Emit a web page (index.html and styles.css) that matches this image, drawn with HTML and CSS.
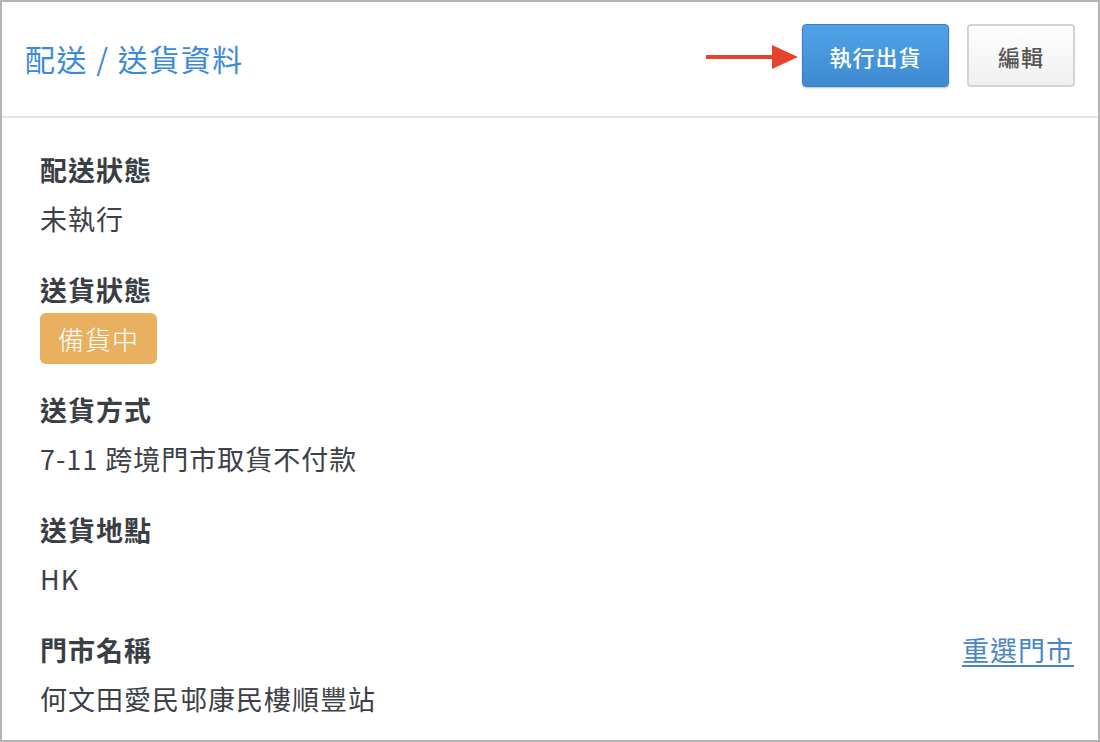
FILE: index.html
```html
<!DOCTYPE html>
<html lang="zh-Hant">
<head>
  <meta charset="UTF-8">
  <meta name="viewport" content="width=device-width, initial-scale=1.0">
  <title>配送 / 送貨資料</title>
  <link rel="stylesheet" href="styles.css">
</head>
<body>
  <div class="panel">
    <div class="panel-header">
      <h1 class="title">配送 / 送貨資料</h1>
      <div class="actions">
        <svg class="arrow" width="94" height="26" viewBox="0 0 94 26">
          <path d="M0 13 H68" stroke="#e5432b" stroke-width="4" stroke-linecap="round"/>
          <path d="M66 1 L92 13 L66 25 Z" fill="#e5432b"/>
        </svg>
        <button class="btn btn-primary">執行出貨</button>
        <button class="btn btn-default">編輯</button>
      </div>
    </div>

    <div class="panel-body">
      <div class="field">
        <div class="label">配送狀態</div>
        <div class="value">未執行</div>
      </div>
      <div class="field">
        <div class="label">送貨狀態</div>
        <div class="value"><span class="badge">備貨中</span></div>
      </div>
      <div class="field">
        <div class="label">送貨方式</div>
        <div class="value">7-11 跨境門市取貨不付款</div>
      </div>
      <div class="field">
        <div class="label">送貨地點</div>
        <div class="value">HK</div>
      </div>
      <div class="field">
        <div class="label-row">
          <div class="label">門市名稱</div>
          <a class="link" href="#">重選門市</a>
        </div>
        <div class="value">何文田愛民邨康民樓順豐站</div>
      </div>
    </div>
  </div>
</body>
</html>
```

FILE: styles.css
```css
* {
  box-sizing: border-box;
}
body {
  margin: 0;
  font-family: "Noto Sans CJK TC", "Noto Sans", sans-serif;
  background: #fff;
}
.panel {
  width: 1100px;
  height: 742px;
  border: 2px solid #b4b4b4;
  background: #fff;
  overflow: hidden;
}
.panel-header {
  height: 116px;
  display: flex;
  align-items: center;
  justify-content: space-between;
  padding: 0 23px 0 23px;
  border-bottom: 2px solid #e5e5e5;
}
.title {
  margin: -2px 0 0;
  font-size: 30px;
  font-weight: 400;
  color: #3b8ad7;
  letter-spacing: 1.5px;
}
.actions {
  display: flex;
  align-items: center;
  margin-top: -7px;
}
.arrow {
  margin-right: 2px;
  margin-top: 2px;
}
.btn {
  height: 63px;
  font-family: inherit;
  font-size: 22px;
  font-weight: 500;
  letter-spacing: 1px;
  border-radius: 4px;
  cursor: pointer;
}
.btn-primary {
  width: 147px;
  color: #fff;
  background: linear-gradient(#50a3e8, #3e8ad1);
  border: 1px solid #3a7fc2;
  box-shadow: 0 1px 2px rgba(0, 0, 0, 0.25);
}
.btn-default {
  width: 108px;
  margin-left: 18px;
  color: #555;
  background: linear-gradient(#fff, #efefef);
  border: 2px solid #d3d3d3;
}
.panel-body {
  padding: 27px 24px 0 38px;
}
.field {
  margin-bottom: 22px;
}
.label-row {
  display: flex;
  justify-content: space-between;
  align-items: center;
}
.label {
  font-size: 27px;
  line-height: 49px;
  font-weight: 700;
  letter-spacing: 1px;
  color: #3a3e45;
}
.value {
  height: 49px;
  font-size: 27px;
  line-height: 49px;
  letter-spacing: 1px;
  color: #3c4047;
}
.badge {
  display: inline-block;
  margin-top: -1px;
  padding: 0 18px 0 18px;
  height: 51px;
  line-height: 51px;
  font-size: 26px;
  font-weight: 300;
  color: #fff;
  background: #e8b05f;
  border-radius: 6px;
  vertical-align: top;
}
.link {
  font-size: 27px;
  line-height: 49px;
  letter-spacing: 1px;
  color: #4a86c7;
  text-decoration: underline;
  text-underline-offset: 4px;
}
```
